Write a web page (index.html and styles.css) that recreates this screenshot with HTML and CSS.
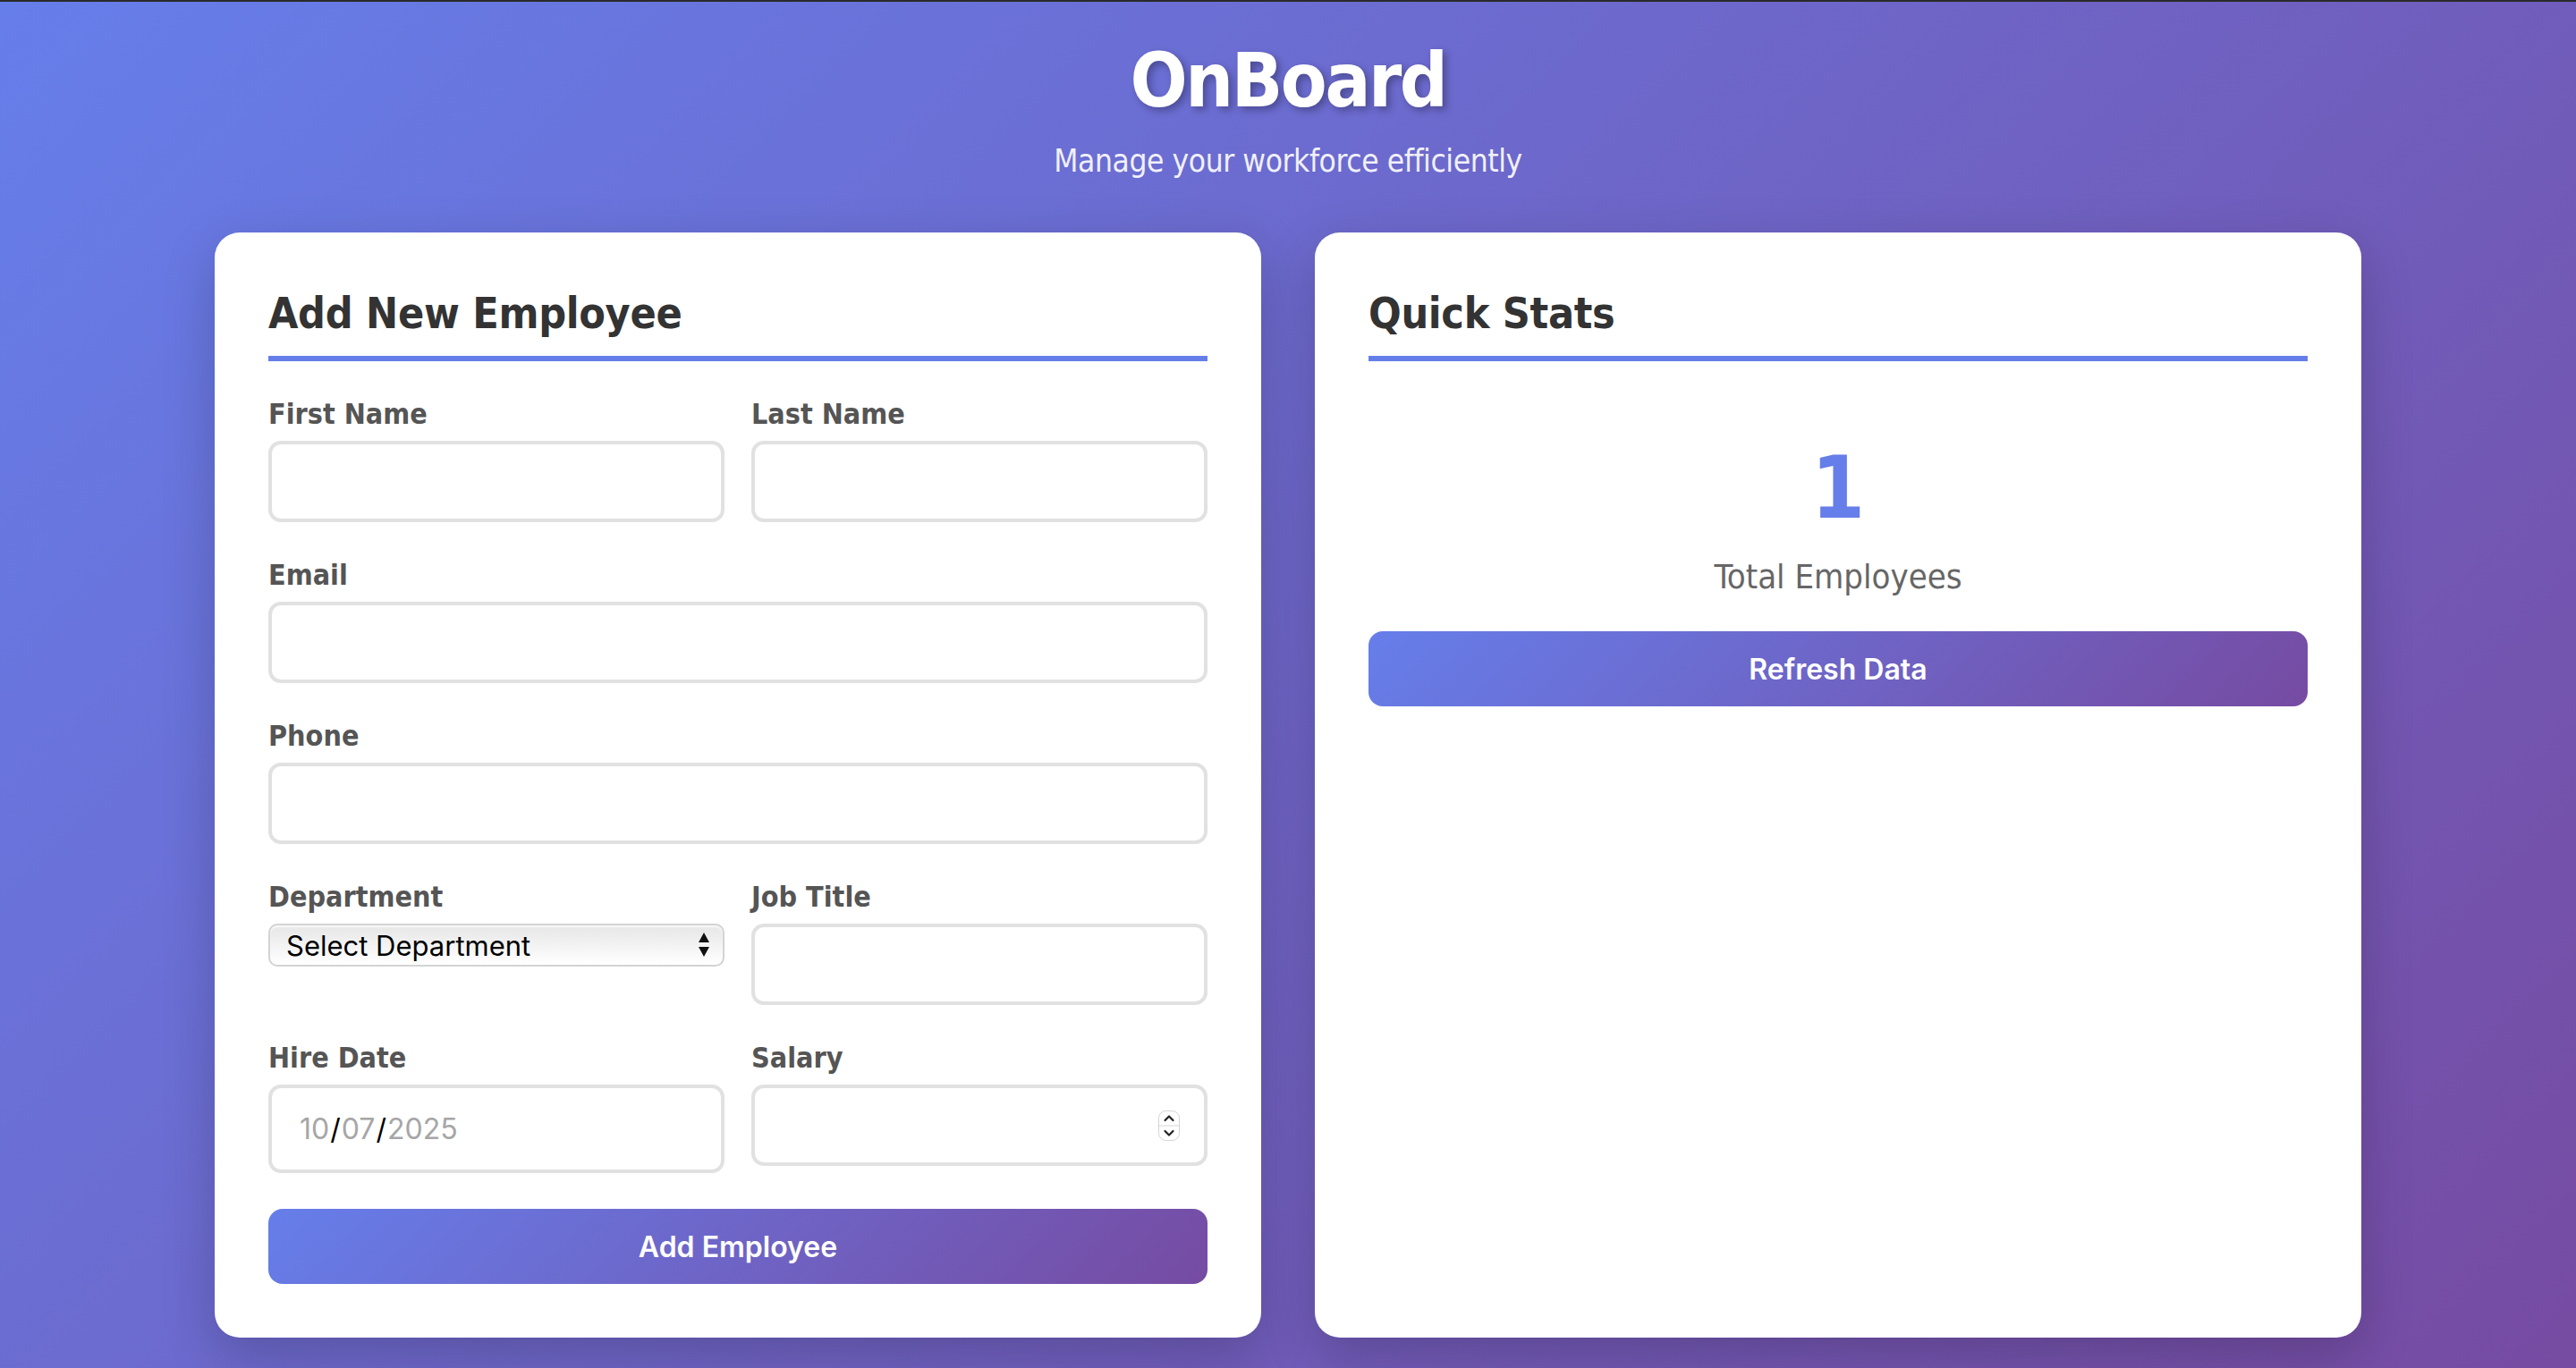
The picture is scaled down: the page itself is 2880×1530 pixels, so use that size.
FILE: index.html
```html
<!DOCTYPE html>
<html lang="en">
<head>
<meta charset="utf-8">
<title>OnBoard</title>
<link rel="stylesheet" href="styles.css">
</head>
<body>
<div class="container">
  <header class="header">
    <h1 class="title">OnBoard</h1>
    <p class="subtitle">Manage your workforce efficiently</p>
  </header>
  <main class="grid">
    <section class="card">
      <h2 class="card-title">Add New Employee</h2>
      <form class="form">
        <div class="form-row">
          <div class="form-group">
            <label class="label">First Name</label>
            <input class="field" type="text">
          </div>
          <div class="form-group">
            <label class="label">Last Name</label>
            <input class="field" type="text">
          </div>
        </div>
        <div class="form-group">
          <label class="label">Email</label>
          <input class="field" type="email">
        </div>
        <div class="form-group">
          <label class="label">Phone</label>
          <input class="field" type="tel">
        </div>
        <div class="form-row">
          <div class="form-group">
            <label class="label">Department</label>
            <div class="select-wrap">
              <select class="select">
                <option>Select Department</option>
              </select>
              <svg class="select-arrows" width="14" height="30" viewBox="0 0 14 30">
                <path d="M7 1 L13 12 L1 12 Z" fill="#111"/>
                <path d="M1 17 L13 17 L7 28 Z" fill="#111"/>
              </svg>
            </div>
          </div>
          <div class="form-group">
            <label class="label">Job Title</label>
            <input class="field" type="text">
          </div>
        </div>
        <div class="form-row">
          <div class="form-group">
            <label class="label">Hire Date</label>
            <div class="field date-field">
              <span class="date-part">10</span><span class="date-sep">/</span><span class="date-part">07</span><span class="date-sep">/</span><span class="date-part">2025</span>
            </div>
          </div>
          <div class="form-group">
            <label class="label">Salary</label>
            <div class="number-wrap">
              <input class="field number-field" type="number">
              <svg class="spinner" width="24" height="34" viewBox="0 0 24 34">
                <rect x="0.5" y="0.5" width="23" height="33" rx="8" fill="#fff" stroke="#d4d4d4"/>
                <line x1="1" y1="17" x2="23" y2="17" stroke="#d4d4d4"/>
                <path d="M7.5 11 L12 6.5 L16.5 11" fill="none" stroke="#222" stroke-width="2.2" stroke-linecap="round" stroke-linejoin="round"/>
                <path d="M7.5 23 L12 27.5 L16.5 23" fill="none" stroke="#222" stroke-width="2.2" stroke-linecap="round" stroke-linejoin="round"/>
              </svg>
            </div>
          </div>
        </div>
        <button class="btn" type="button">Add Employee</button>
      </form>
    </section>
    <section class="card">
      <h2 class="card-title">Quick Stats</h2>
      <div class="stat">
        <div class="stat-number">1</div>
        <div class="stat-label">Total Employees</div>
      </div>
      <button class="btn" type="button">Refresh Data</button>
    </section>
  </main>
</div>
</body>
</html>
```
FILE: styles.css
```css
* {
  box-sizing: border-box;
}

html {
  height: 100%;
}

body {
  margin: 0;
  min-height: 100%;
  padding: 38px 40px 0;
  border-top: 2px solid #2a2a2a;
  background: linear-gradient(135deg, #667eea 0%, #764ba2 100%);
  font-family: "DejaVu Sans Condensed", "DejaVu Sans", sans-serif;
  font-stretch: condensed;
}

.container {
  max-width: 2400px;
  margin: 0 auto;
}

.header {
  text-align: center;
  color: #fff;
  margin-bottom: 59px;
}

.title {
  margin: 0 0 18px;
  font-size: 84px;
  line-height: 101px;
  font-weight: bold;
  letter-spacing: -2.4px;
  text-shadow: 4px 4px 8px rgba(0, 0, 0, 0.3);
}

.subtitle {
  margin: 0;
  font-size: 35px;
  line-height: 42px;
  letter-spacing: -0.4px;
  opacity: 0.9;
}

.grid {
  display: grid;
  grid-template-columns: 1fr 1fr;
  gap: 60px;
}

.card {
  background: #fff;
  border-radius: 28px;
  padding: 60px;
  box-shadow: 0 20px 60px rgba(0, 0, 0, 0.2);
}

.card-title {
  margin: 0 0 40px;
  padding-bottom: 18px;
  border-bottom: 6px solid #667eea;
  color: #333;
  font-size: 48px;
  line-height: 60px;
  font-weight: bold;
  letter-spacing: -0.3px;
}

.form-row {
  display: grid;
  grid-template-columns: 1fr 1fr;
  gap: 30px;
  align-items: start;
}

.form-group {
  margin-bottom: 40px;
}

.label {
  display: block;
  margin-bottom: 10px;
  color: #555;
  font-size: 32px;
  line-height: 39px;
  font-weight: bold;
}

.field {
  display: block;
  width: 100%;
  height: 91px;
  padding: 0 24px;
  border: 4px solid #e1e1e1;
  border-radius: 14px;
  background: #fff;
  font-family: Inter, "Liberation Sans", sans-serif;
  font-size: 32px;
  outline: none;
}

.select-wrap {
  position: relative;
}

.select {
  display: block;
  width: 100%;
  height: 48px;
  padding: 0 40px 0 18px;
  border: 2px solid #d3d3d3;
  border-radius: 10px;
  background: linear-gradient(#e6e6e6 0%, #f4f4f4 55%, #ffffff 100%);
  box-shadow: inset 0 2px 2px rgba(255, 255, 255, 0.8);
  -webkit-appearance: none;
  appearance: none;
  color: #000;
  font-family: Inter, "Liberation Sans", sans-serif;
  font-size: 31px;
}

.select-arrows {
  position: absolute;
  right: 16px;
  top: 9px;
  pointer-events: none;
}

.date-field {
  display: flex;
  align-items: center;
  height: 99px;
  padding: 0 31px;
  font-size: 32px;
}

.date-part {
  color: #a6a6a6;
}

.date-sep {
  color: #000;
  margin: 0 1px;
}

.number-wrap {
  position: relative;
}

.number-field {
  -moz-appearance: textfield;
}

.number-field::-webkit-inner-spin-button,
.number-field::-webkit-outer-spin-button {
  -webkit-appearance: none;
  margin: 0;
}

.spinner {
  position: absolute;
  right: 31px;
  top: 29px;
  pointer-events: none;
}

.btn {
  display: block;
  width: 100%;
  height: 84px;
  border: none;
  border-radius: 16px;
  background: linear-gradient(135deg, #667eea 0%, #764ba2 100%);
  color: #fff;
  font-family: Inter, "Liberation Sans", sans-serif;
  font-size: 32px;
  font-weight: 600;
  cursor: pointer;
}

.stat {
  text-align: center;
  padding: 40px 0 38px;
}

.stat-number {
  color: #667eea;
  font-size: 96px;
  line-height: 124px;
  font-weight: bold;
}

.stat-label {
  margin-top: 14px;
  color: #666;
  font-size: 38px;
  line-height: 46px;
}
```
